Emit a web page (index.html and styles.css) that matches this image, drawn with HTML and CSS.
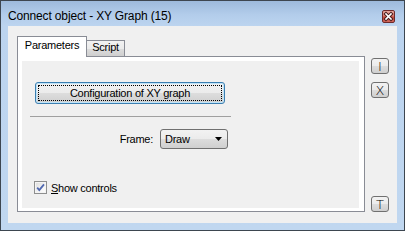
FILE: index.html
```html
<!DOCTYPE html>
<html>
<head>
<meta charset="utf-8">
<link rel="stylesheet" href="styles.css">
</head>
<body>
<div class="window">
  <div class="titlebar">
    <span class="title">Connect object - XY Graph (15)</span>
    <button class="close" aria-label="Close">
      <svg width="11" height="11" viewBox="0 0 11 11">
        <path d="M3 3 L8 8 M8 3 L3 8" stroke="#4a1c1c" stroke-width="3.6" stroke-linecap="square"/>
        <path d="M3 3 L8 8 M8 3 L3 8" stroke="#ffffff" stroke-width="1.6" stroke-linecap="square"/>
      </svg>
    </button>
  </div>
  <div class="client">
    <div class="tabs">
      <div class="tabstrip">
        <div class="tab active">Parameters</div>
        <div class="tab">Script</div>
      </div>
      <div class="panel">
        <div class="page">
          <button class="big"><span class="focus">Configuration of XY graph</span></button>
          <div class="sep"></div>
          <div class="frame-row">
            <span class="frame-label">Frame:</span>
            <div class="select">
              <span>Draw</span>
              <svg class="arrow" width="7" height="4" viewBox="0 0 7 4"><path d="M0 0 H7 L3.5 4 Z" fill="#000"/></svg>
            </div>
          </div>
          <label class="check">
            <span class="box">
              <svg width="11" height="11" viewBox="0 0 11 11"><path d="M2.2 5.6 L4.3 8 L9 2.4" fill="none" stroke="#5068b0" stroke-width="1.8"/></svg>
            </span>
            <span class="check-text"><u>S</u>how controls</span>
          </label>
        </div>
      </div>
    </div>
    <div class="side">
      <button class="sbtn">I</button>
      <button class="sbtn gap">X</button>
      <button class="sbtn bottom">T</button>
    </div>
  </div>
</div>
</body>
</html>
```
FILE: styles.css
```css
html, body {
  margin: 0;
  padding: 0;
}
body {
  font-family: "Liberation Sans", Arial, sans-serif;
  font-size: 11px;
  color: #000;
}
button {
  font-family: inherit;
  padding: 0;
  margin: 0;
  color: #000;
}
.window {
  width: 405px;
  height: 231px;
  box-sizing: border-box;
  border: 1px solid #3d4650;
  background: linear-gradient(to bottom, #9dbadc 0px, #b3cdeb 14px, #bcd4ef 25px, #c0d7f0 100%);
  padding: 0 7px 7px 7px;
  display: flex;
  flex-direction: column;
}
.titlebar {
  height: 25px;
  display: flex;
  align-items: flex-start;
  justify-content: space-between;
}
.title {
  font-size: 12px;
  line-height: 14px;
  letter-spacing: -0.15px;
  margin-top: 8px;
  color: #000;
}
.close {
  width: 13px;
  height: 13px;
  margin-top: 9px;
  margin-right: 2px;
  box-sizing: border-box;
  border: 1px solid #6e2a2a;
  border-radius: 2px;
  background: linear-gradient(to bottom, #e9a9a0 0%, #d77a6e 45%, #c4473a 55%, #d0685c 100%);
  display: flex;
  align-items: center;
  justify-content: center;
}
.close svg {
  display: block;
}
.client {
  height: 197px;
  background: #f0f0f0;
  display: flex;
  padding: 10px 0 0 9px;
  box-sizing: border-box;
}
.tabs {
  width: 348px;
  height: 176px;
  display: flex;
  flex-direction: column;
}
.tabstrip {
  height: 20px;
  display: flex;
  align-items: flex-end;
  letter-spacing: -0.25px;
}
.tab {
  box-sizing: border-box;
  text-align: center;
  line-height: 13px;
}
.tab.active {
  width: 70px;
  height: 21px;
  margin-bottom: -1px;
  border: 1px solid #898c95;
  border-bottom: none;
  background: #fff;
  padding-top: 2px;
  position: relative;
  z-index: 1;
}
.tab:not(.active) {
  width: 38px;
  height: 16px;
  border: 1px solid #898c95;
  border-left: none;
  border-bottom: none;
  background: linear-gradient(to bottom, #f2f2f2 0%, #ebebeb 50%, #dddddd 50%, #cfcfcf 100%);
  padding-top: 0;
}
.panel {
  flex: 1;
  box-sizing: border-box;
  border: 1px solid #898c95;
  background: #fff;
  padding: 4px 5px 3px 4px;
  display: flex;
}
.page {
  flex: 1;
  background: #f0f0f0;
  display: flex;
  flex-direction: column;
  align-items: flex-start;
  letter-spacing: -0.25px;
}
.big {
  width: 190px;
  height: 22px;
  margin: 21px 0 0 13px;
  box-sizing: border-box;
  border: 1px solid #3c7fb1;
  border-radius: 3px;
  background: linear-gradient(to bottom, #f2f2f2 0%, #ebebeb 50%, #dddddd 50%, #cfcfcf 100%);
  box-shadow: inset 0 0 0 1px #bfe3f8;
  padding: 2px;
  font-size: 11px;
  letter-spacing: -0.25px;
  display: flex;
}
.focus {
  flex: 1;
  border: 1px dotted #000;
  display: flex;
  align-items: center;
  justify-content: center;
  line-height: 13px;
}
.sep {
  width: 201px;
  height: 0;
  border-top: 1px solid #a0a0a0;
  margin: 12px 0 0 8px;
}
.frame-row {
  width: 206px;
  margin-top: 12px;
  display: flex;
  align-items: center;
  justify-content: flex-end;
}
.frame-label {
  margin-right: 7px;
}
.select {
  width: 68px;
  height: 20px;
  box-sizing: border-box;
  border: 1px solid #707070;
  border-radius: 3px;
  background: linear-gradient(to bottom, #f2f2f2 0%, #ebebeb 50%, #dddddd 50%, #cfcfcf 100%);
  display: flex;
  align-items: center;
  justify-content: space-between;
  padding: 0 5px 0 4px;
}
.arrow {
  display: block;
}
.check {
  margin: 32px 0 0 12px;
  display: flex;
  align-items: center;
}
.box {
  width: 13px;
  height: 13px;
  box-sizing: border-box;
  border: 1px solid #8e8f8f;
  background: linear-gradient(135deg, #dcdcdc 0%, #f4f4f4 60%, #ffffff 100%);
  box-shadow: inset 0 0 0 1px #f4f4f4;
  display: flex;
  align-items: center;
  justify-content: center;
  margin-right: 4px;
}
.box svg {
  display: block;
}
.side {
  margin-left: 6px;
  height: 176px;
  display: flex;
  flex-direction: column;
}
.sbtn {
  width: 18px;
  height: 16px;
  box-sizing: border-box;
  border: 1px solid #707070;
  border-radius: 3px;
  background: linear-gradient(to bottom, #f2f2f2 0%, #ebebeb 50%, #dddddd 50%, #cfcfcf 100%);
  font-family: "DejaVu Sans", sans-serif;
  font-size: 13px;
  line-height: 13px;
  font-weight: 200;
  display: flex;
  align-items: center;
  justify-content: center;
}
.sbtn:first-child {
  margin-top: 22px;
}
.sbtn.gap {
  margin-top: 8px;
}
.sbtn.bottom {
  margin-top: auto;
}
```
